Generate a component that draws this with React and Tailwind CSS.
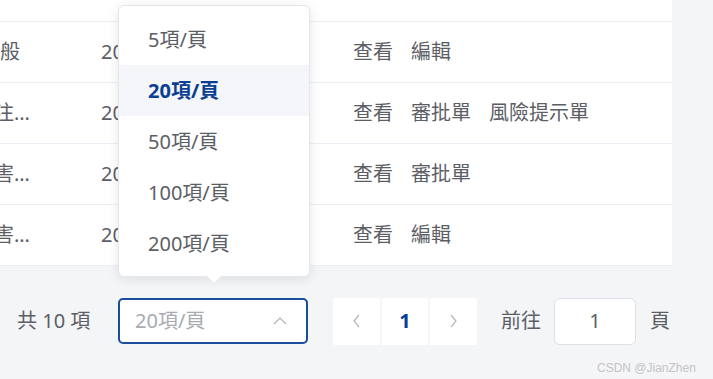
import React from 'react';

const FONT = { fontFamily: '"Noto Sans", "Noto Sans CJK TC", sans-serif' };

const rows = [
  { name: '一般', off: '-ml-[20px]', date: '2023-08-15', actions: ['查看', '編輯'] },
  { name: '關注…', off: '-ml-[26px]', date: '2023-08-14', actions: ['查看', '審批單', '風險提示單'] },
  { name: '損害…', off: '-ml-[26px]', date: '2023-08-12', actions: ['查看', '審批單'] },
  { name: '損害…', off: '-ml-[26px]', date: '2023-08-10', actions: ['查看', '編輯'] },
];

const sizes = ['5項/頁', '20項/頁', '50項/頁', '100項/頁', '200項/頁'];

function Chevron({ dir = 'left', className = '' }) {
  const d = {
    left: 'M6 1 L1 7 L6 13',
    right: 'M1 1 L6 7 L1 13',
    up: 'M1 7 L7 1 L13 7',
  }[dir];
  const vb = dir === 'up' ? '0 0 14 8' : '0 0 7 14';
  return (
    <svg viewBox={vb} className={className} fill="none" stroke="currentColor" strokeWidth="1.2">
      <path d={d} />
    </svg>
  );
}

export default function App() {
  return (
    <div
      className="relative w-[713px] h-[379px] overflow-hidden bg-[#f4f5f7] text-[20px] text-[#5c5e66]"
      style={FONT}
    >
      {/* table */}
      <div className="w-[672px] bg-white border-b border-[#ebeef5]">
        <div className="h-[21px]" />
        {rows.map((r, i) => (
          <div key={i} className="h-[61px] border-t border-[#ebeef5] flex items-center">
            <div className="w-[101px] overflow-hidden whitespace-nowrap">
              <span className={`inline-block ${r.off}`}>{r.name}</span>
            </div>
            <div className="w-[252px] whitespace-nowrap">{r.date}</div>
            <div className="flex gap-[18px]">
              {r.actions.map((a) => (
                <span key={a}>{a}</span>
              ))}
            </div>
          </div>
        ))}
      </div>

      {/* footer */}
      <div className="flex items-center pt-[31px] pl-[17px] h-[79px]">
        <span className="w-[101px] whitespace-nowrap">共 10 項</span>
        <div className="w-[190px] h-[46px] border-2 border-[#1a4d9c] rounded-[5px] bg-white flex items-center justify-between pl-[15px] pr-[19px]">
          <span className="text-[#a8abb2]">20項/頁</span>
          <Chevron dir="up" className="w-[14px] h-[8px] text-[#b0b3ba]" />
        </div>
        <div className="ml-[25px] flex gap-[2px]">
          <div className="w-[47px] h-[47px] bg-white rounded-[2px] flex items-center justify-center">
            <Chevron dir="left" className="w-[7px] h-[14px] text-[#b4b7be]" />
          </div>
          <div className="w-[46px] h-[47px] bg-white rounded-[2px] flex items-center justify-center font-bold text-[#0b3f93]">
            1
          </div>
          <div className="w-[47px] h-[47px] bg-white rounded-[2px] flex items-center justify-center">
            <Chevron dir="right" className="w-[7px] h-[14px] text-[#b4b7be]" />
          </div>
        </div>
        <span className="ml-[24px]">前往</span>
        <div className="ml-[13px] w-[82px] h-[47px] bg-white border border-[#dcdfe6] rounded-[6px] flex items-center justify-center">
          1
        </div>
        <span className="ml-[14px]">頁</span>
      </div>

      {/* dropdown */}
      <div className="absolute left-[118px] top-[5px] w-[192px] h-[272px] bg-white border border-[#e4e7ed] rounded-[6px] shadow-[0_2px_12px_rgba(0,0,0,0.1)] py-[8px]">
        {sizes.map((s, i) => (
          <div
            key={s}
            className={
              'h-[51px] flex items-center pl-[29px] ' +
              (i === 1 ? 'bg-[#f4f6fa] font-bold text-[#0b3f93]' : '')
            }
          >
            {s}
          </div>
        ))}
        <div className="absolute left-[89px] -bottom-[6px] w-[12px] h-[12px] bg-white rotate-45 border-r border-b border-[#e4e7ed]" />
      </div>

      <div
        className="absolute left-[597px] top-[359px] text-[12px] text-[#c4c4c4]"
        style={{ fontFamily: '"Liberation Sans", sans-serif' }}
      >
        CSDN @JianZhen
      </div>
    </div>
  );
}
